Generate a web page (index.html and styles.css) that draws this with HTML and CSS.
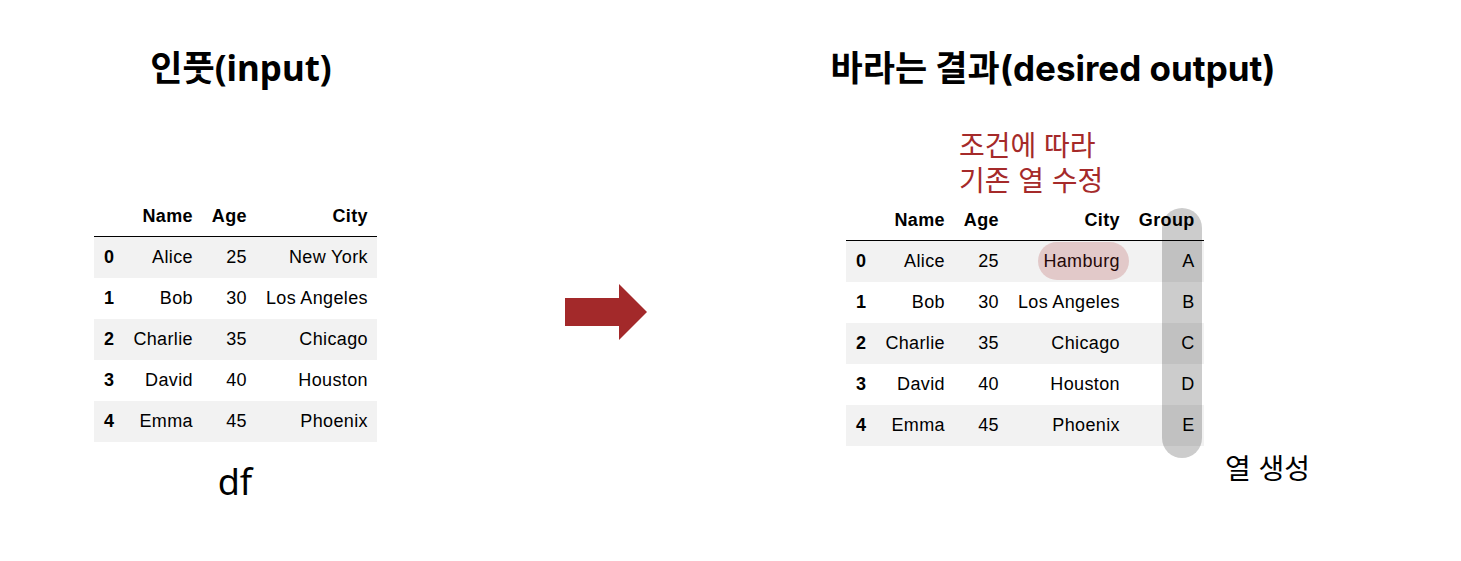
FILE: index.html
```html
<!DOCTYPE html>
<html lang="ko">
<head>
<meta charset="utf-8">
<title>input vs desired output</title>
<link rel="stylesheet" href="styles.css">
</head>
<body>
<div class="page">
  <section class="panel panel-in">
    <h1 class="title title-in">인풋(input)</h1>
    <table class="df">
      <thead>
        <tr><th></th><th>Name</th><th>Age</th><th>City</th></tr>
      </thead>
      <tbody>
        <tr><th>0</th><td>Alice</td><td>25</td><td>New York</td></tr>
        <tr><th>1</th><td>Bob</td><td>30</td><td>Los Angeles</td></tr>
        <tr><th>2</th><td>Charlie</td><td>35</td><td>Chicago</td></tr>
        <tr><th>3</th><td>David</td><td>40</td><td>Houston</td></tr>
        <tr><th>4</th><td>Emma</td><td>45</td><td>Phoenix</td></tr>
      </tbody>
    </table>
    <p class="caption">df</p>
  </section>

  <div class="arrow">
    <svg width="82" height="56" viewBox="0 0 82 56" aria-hidden="true">
      <polygon points="0,14 54,14 54,0 82,28 54,56 54,42 0,42" fill="#a3292a"/>
    </svg>
  </div>

  <section class="panel panel-out">
    <h1 class="title title-out">바라는 결과(desired output)</h1>
    <p class="note">조건에 따라<br>기존 열 수정</p>
    <div class="table-wrap">
      <table class="df">
        <thead>
          <tr><th></th><th>Name</th><th>Age</th><th>City</th><th>Group</th></tr>
        </thead>
        <tbody>
          <tr><th>0</th><td>Alice</td><td>25</td><td><span class="changed">Hamburg</span></td><td>A</td></tr>
          <tr><th>1</th><td>Bob</td><td>30</td><td>Los Angeles</td><td>B</td></tr>
          <tr><th>2</th><td>Charlie</td><td>35</td><td>Chicago</td><td>C</td></tr>
          <tr><th>3</th><td>David</td><td>40</td><td>Houston</td><td>D</td></tr>
          <tr><th>4</th><td>Emma</td><td>45</td><td>Phoenix</td><td>E</td></tr>
        </tbody>
      </table>
      <div class="col-mark"></div>
    </div>
    <p class="caption-new">열 생성</p>
  </section>
</div>
</body>
</html>
```

FILE: styles.css
```css
html, body {
  margin: 0;
  padding: 0;
  background: #ffffff;
}

.page {
  display: flex;
  align-items: flex-start;
  padding: 48px 0 0 94px;
  font-family: "Noto Sans", "Noto Sans CJK KR", sans-serif;
  color: #000;
}

.panel {
  display: flex;
  flex-direction: column;
  align-items: flex-start;
  flex: none;
}

.panel-in {
  width: 282px;
}

.panel-out {
  width: 356px;
  margin-left: 199px;
}

.title {
  display: flex;
  justify-content: center;
  align-self: stretch;
  margin: 0;
  font-size: 35px;
  line-height: 40px;
  font-weight: 700;
  white-space: nowrap;
}

.title-in {
  padding-left: 12px;
  font-family: "Noto Sans", "Noto Sans CJK KR", sans-serif;
}

.title-out {
  padding-left: 58px;
  font-family: "Inter", "Noto Sans CJK KR", sans-serif;
}

.panel-in .df {
  margin-top: 108px;
}

.df {
  border-collapse: collapse;
  font-family: "Liberation Sans", Arial, sans-serif;
  font-size: 18px;
  letter-spacing: 0.35px;
  color: #000;
}

.df th,
.df td {
  padding: 10px 9px 10px 10px;
  line-height: 21px;
  text-align: right;
  white-space: nowrap;
}

.df thead th {
  padding-top: 9.5px;
  padding-bottom: 9.5px;
  font-weight: 700;
  border-bottom: 1px solid #000;
}

.df tbody th {
  font-weight: 700;
}

.df tbody tr:nth-child(odd) {
  background: #f2f2f2;
}

.caption {
  align-self: stretch;
  margin: 18px 0 0;
  text-align: center;
  font-family: "Noto Sans", sans-serif;
  font-size: 36px;
  line-height: 44px;
}

.arrow {
  display: flex;
  flex: none;
  margin: 236px 0 0 189px;
}

.note {
  margin: 41px 0 0;
  padding-left: 113px;
  font-family: "Liberation Sans", "Noto Sans CJK KR", sans-serif;
  font-size: 28px;
  line-height: 35px;
  color: #a52a2a;
  white-space: nowrap;
}

.table-wrap {
  position: relative;
  margin-top: 1px;
}

.col-mark {
  position: absolute;
  top: 8px;
  right: 2px;
  width: 40px;
  height: 250px;
  border-radius: 20px;
  background: rgba(0, 0, 0, 0.2);
}

.changed {
  position: relative;
}

.changed::after {
  content: "";
  position: absolute;
  inset: -9px -9px -9px -5px;
  border-radius: 20px;
  background: rgba(165, 42, 42, 0.2);
}

.caption-new {
  margin: 4px 0 0 379px;
  font-family: "Noto Sans CJK KR", sans-serif;
  font-size: 28px;
  line-height: 35px;
  white-space: nowrap;
}
```
